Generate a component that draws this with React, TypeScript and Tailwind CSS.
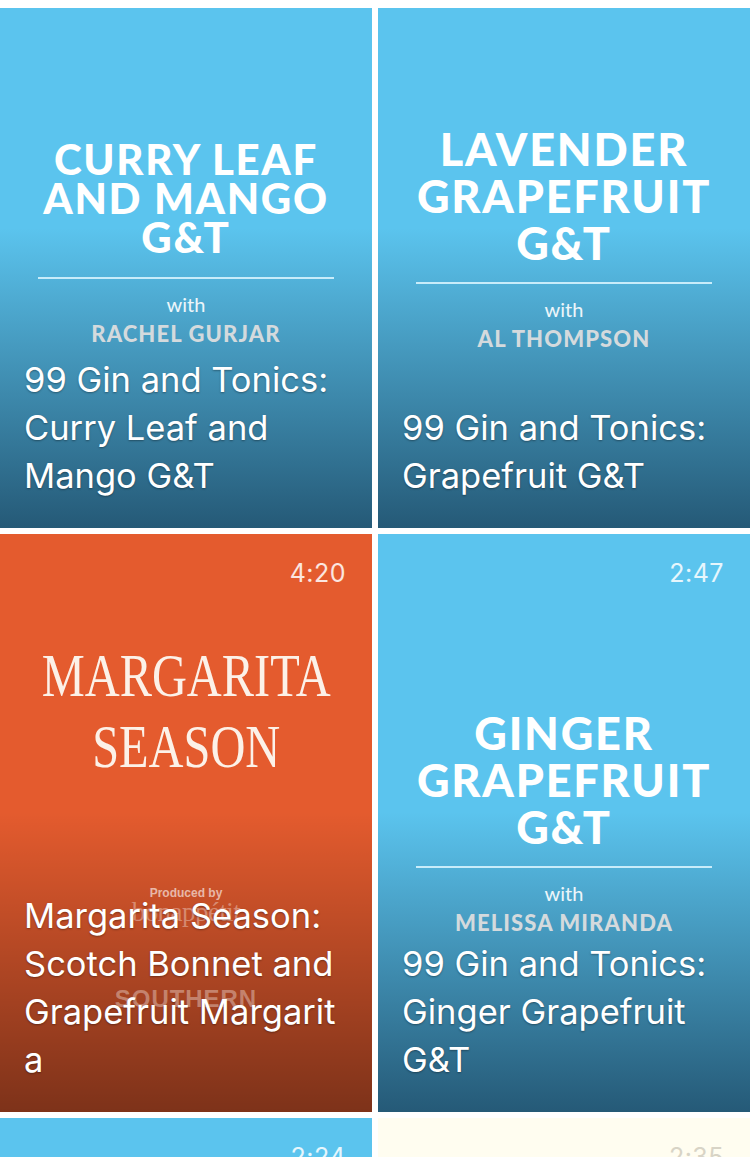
import type { ReactNode } from "react";

type Card = {
  id: number;
  height: string;
  bg: string;
  shade: string;
  time?: string;
  timeColor?: string;
  poster?: ReactNode;
  caption?: string[];
};

function GinPoster({
  lines,
  titleClass,
  titleGap,
  name,
  pb,
}: {
  lines: string[];
  titleClass: string;
  titleGap: string;
  name: string;
  pb: string;
}) {
  return (
    <div className={`relative flex h-full flex-col items-center justify-end ${pb}`}>
      <div
        className={`font-['Lato',sans-serif] font-black uppercase tracking-[0.04em] text-center text-white ${titleClass} ${titleGap}`}
      >
        {lines.map((l) => (
          <div key={l}>{l}</div>
        ))}
      </div>
      <div className="h-[2px] w-[296px] bg-[#c8ecfa]" />
      <div className="mt-[13px] font-['Lato',sans-serif] text-[20px] leading-[24px] text-white/90">
        with
      </div>
      <div className="mt-[4px] font-['Lato',sans-serif] text-[22px] font-black leading-[28px] tracking-[0.05em] text-[#d4dadd]">
        {name}
      </div>
    </div>
  );
}

function MargaritaPoster() {
  return (
    <div className="relative flex h-full flex-col items-center pt-[106px]">
      <div className="scale-x-[0.78] text-center font-['Liberation_Serif',serif] text-[62px] leading-[71px] text-[#fcf1e8]">
        <div>MARGARITA</div>
        <div>SEASON</div>
      </div>
      <div className="mt-[104px] font-['Liberation_Sans',sans-serif] text-[12px] font-bold leading-[14px] text-white/60">
        Produced by
      </div>
      <div className="mt-[-1px] font-['Liberation_Serif',serif] text-[27px] leading-[26px] tracking-[-0.02em] text-white/35">
        bonappétit
      </div>
      <div className="mt-[60px] font-['Liberation_Sans',sans-serif] text-[24px] font-bold leading-[27px] tracking-[0.04em] text-white/35">
        SOUTHERN
      </div>
    </div>
  );
}

const cards: Card[] = [
  {
    id: 1,
    height: "h-[520px]",
    bg: "bg-[#5bc4ee]",
    shade: "to-[#0e2c44]/70",
    poster: (
      <GinPoster
        lines={["CURRY LEAF", "AND MANGO", "G&T"]}
        titleClass="text-[42px] leading-[39px]"
        titleGap="mb-[20px]"
        name="RACHEL GURJAR"
        pb="pb-[180px]"
      />
    ),
    caption: ["99 Gin and Tonics:", "Curry Leaf and", "Mango G&T"],
  },
  {
    id: 2,
    height: "h-[520px]",
    bg: "bg-[#5bc4ee]",
    shade: "to-[#0e2c44]/70",
    poster: (
      <GinPoster
        lines={["LAVENDER", "GRAPEFRUIT", "G&T"]}
        titleClass="text-[45px] leading-[47px]"
        titleGap="mb-[15px]"
        name="AL THOMPSON"
        pb="pb-[175px]"
      />
    ),
    caption: ["99 Gin and Tonics:", "Grapefruit G&T"],
  },
  {
    id: 3,
    height: "h-[578px]",
    bg: "bg-[#e45b2e]",
    shade: "to-black/45",
    time: "4:20",
    poster: <MargaritaPoster />,
    caption: [
      "Margarita Season:",
      "Scotch Bonnet and",
      "Grapefruit Margarit",
      "a",
    ],
  },
  {
    id: 4,
    height: "h-[578px]",
    bg: "bg-[#5bc4ee]",
    shade: "to-[#0e2c44]/70",
    time: "2:47",
    poster: (
      <GinPoster
        lines={["GINGER", "GRAPEFRUIT", "G&T"]}
        titleClass="text-[45px] leading-[47px]"
        titleGap="mb-[15px]"
        name="MELISSA MIRANDA"
        pb="pb-[175px]"
      />
    ),
    caption: ["99 Gin and Tonics:", "Ginger Grapefruit", "G&T"],
  },
  {
    id: 5,
    height: "h-[578px]",
    bg: "bg-[#5bc4ee]",
    shade: "to-[#0e2c44]/70",
    time: "2:24",
  },
  {
    id: 6,
    height: "h-[578px]",
    bg: "bg-[#fffdf0]",
    shade: "to-transparent",
    time: "2:35",
    timeColor: "text-[#d8d4c6]",
  },
];

function VideoCard({ card }: { card: Card }) {
  return (
    <div className={`relative overflow-hidden ${card.height} ${card.bg}`}>
      {card.caption && (
        <div
          className={`absolute inset-x-0 bottom-0 h-[300px] bg-linear-to-b from-transparent ${card.shade}`}
        />
      )}
      {card.poster}
      {card.time && (
        <span
          className={`absolute right-[26px] top-[24px] font-['Inter',sans-serif] text-[25px] leading-[30px] tracking-[0.02em] ${
            card.timeColor ?? "text-white/85"
          }`}
        >
          {card.time}
        </span>
      )}
      {card.caption && (
        <div className="absolute inset-x-0 bottom-0 px-[24px] pb-[28px] font-['Inter',sans-serif] text-[34.5px] leading-[48px] text-white [text-shadow:0_1px_2px_rgba(0,0,0,0.35)]">
          {card.caption.map((line, i) => (
            <div key={i} className="whitespace-nowrap">
              {line}
            </div>
          ))}
        </div>
      )}
    </div>
  );
}

export default function App() {
  return (
    <div className="h-[1157px] w-[750px] overflow-hidden bg-white pt-[8px]">
      <div className="grid grid-cols-2 gap-[6px]">
        {cards.map((c) => (
          <VideoCard key={c.id} card={c} />
        ))}
      </div>
    </div>
  );
}
